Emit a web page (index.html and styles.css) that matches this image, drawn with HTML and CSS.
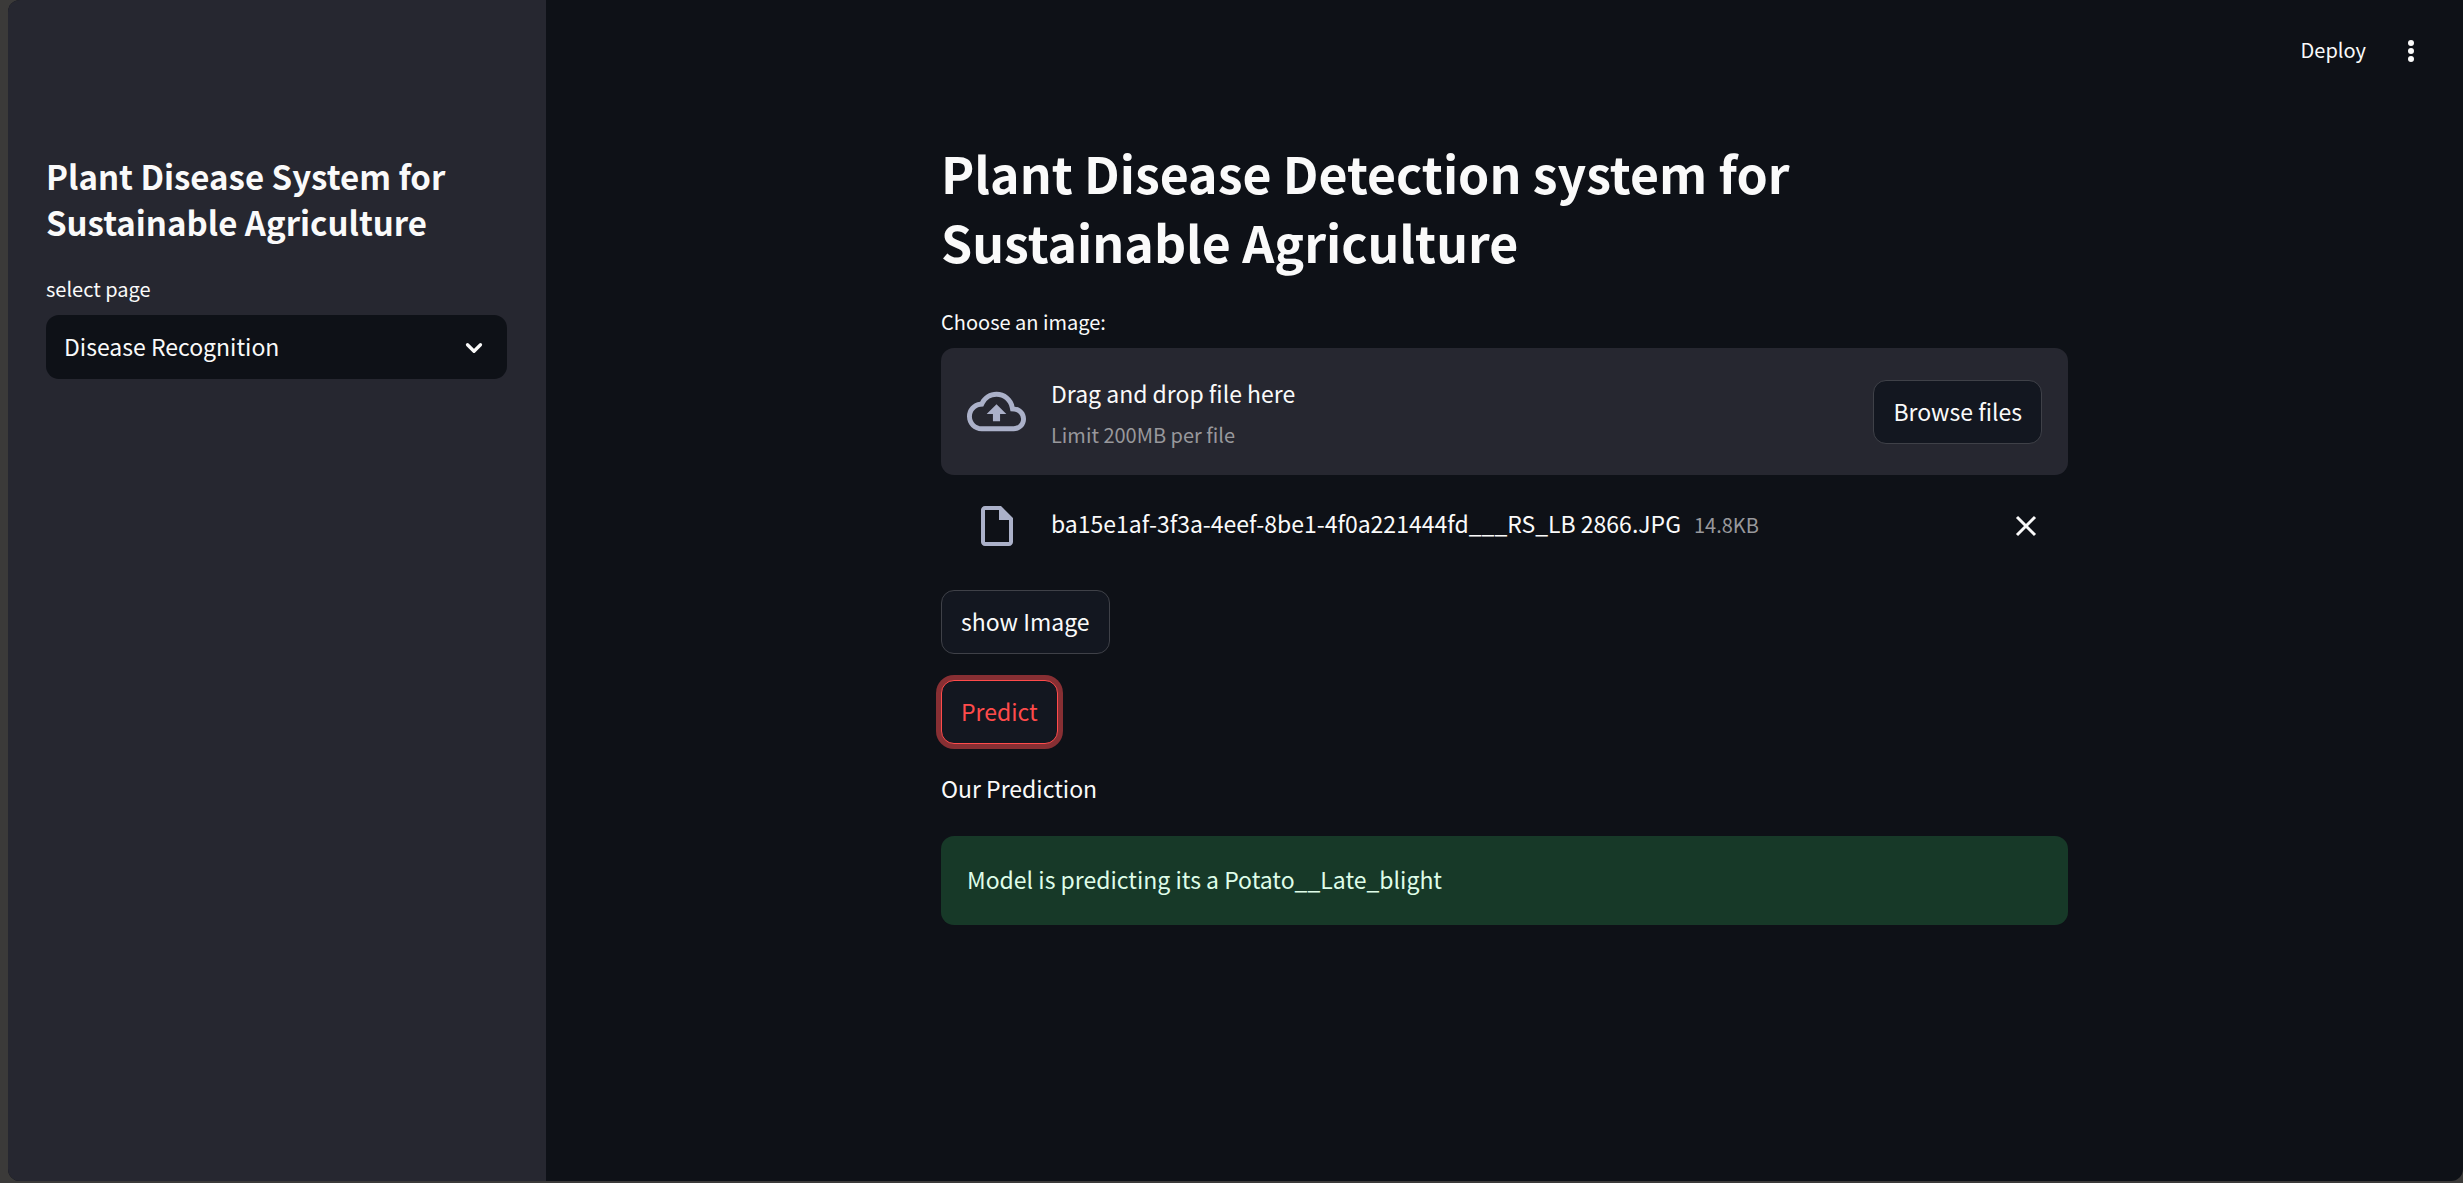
FILE: index.html
```html
<!DOCTYPE html>
<html lang="en">
<head>
<meta charset="utf-8">
<title>Plant Disease Detection</title>
<link rel="stylesheet" href="styles.css">
</head>
<body>
<div class="app">
  <aside class="sidebar">
    <h2 class="sidebar-title">Plant Disease System for Sustainable Agriculture</h2>
    <label class="label" for="page">select page</label>
    <div class="select-box">
      <select class="select" id="page"><option>Disease Recognition</option></select>
      <svg class="chevron" viewBox="0 0 24 24" aria-hidden="true"><path d="M6 9l6 6 6-6"/></svg>
    </div>
  </aside>
  <div class="page">
    <header class="toolbar">
      <button class="plain deploy" type="button">Deploy</button>
      <button class="plain" type="button" aria-label="Main menu">
        <svg class="dots" viewBox="0 0 26 26"><circle cx="13" cy="5" r="3"/><circle cx="13" cy="13" r="3"/><circle cx="13" cy="21" r="3"/></svg>
      </button>
    </header>
    <main class="content">
      <h1 class="title">Plant Disease Detection system for Sustainable Agriculture</h1>
      <label class="label" for="browse">Choose an image:</label>
      <section class="dropzone">
        <svg class="cloud" viewBox="0 0 24 24" aria-hidden="true"><path d="M19.35 10.04A7.49 7.49 0 0 0 12 4C9.11 4 6.6 5.64 5.35 8.04A5.994 5.994 0 0 0 0 14c0 3.31 2.69 6 6 6h13c2.76 0 5-2.24 5-5 0-2.64-2.05-4.78-4.65-4.96zM19 18H6c-2.21 0-4-1.79-4-4 0-2.05 1.53-3.76 3.56-3.97l1.07-.11.5-.95A5.469 5.469 0 0 1 12 6c2.62 0 4.88 1.86 5.39 4.43l.3 1.5 1.53.11A2.98 2.98 0 0 1 22 15c0 1.65-1.35 3-3 3zM8 13h2.55v3h2.9v-3H16l-4-4z"/></svg>
        <div class="drop-text">
          <span>Drag and drop file here</span>
          <small class="muted">Limit 200MB per file</small>
        </div>
        <button class="button" id="browse" type="button">Browse files</button>
      </section>
      <div class="file">
        <div class="file-icon"><svg class="doc" viewBox="0 0 24 24" aria-hidden="true"><path d="M6 2c-1.1 0-2 .9-2 2v16c0 1.1.9 2 2 2h12c1.1 0 2-.9 2-2V8l-6-6H6zm0 18V4h7v5h5v11H6z"/></svg></div>
        <div class="file-name"><span>ba15e1af-3f3a-4eef-8be1-4f0a221444fd___RS_LB 2866.JPG</span><small class="muted">14.8KB</small></div>
        <button class="plain" type="button" aria-label="Remove file">
          <svg class="close" viewBox="0 0 32 32"><path d="M7 7l18 18M25 7L7 25"/></svg>
        </button>
      </div>
      <div class="actions">
        <button class="button" type="button">show Image</button>
        <button class="button active" type="button">Predict</button>
      </div>
      <p class="result-label">Our Prediction</p>
      <div class="alert" role="alert">Model is predicting its a Potato__Late_blight</div>
    </main>
  </div>
</div>
</body>
</html>
```
FILE: styles.css
```css
* { box-sizing: border-box; }

body {
  margin: 0;
  background: #3b3a39;
  color: #fafafa;
  font-family: "Source Sans Pro", "Noto Sans CJK SC", sans-serif;
  font-size: 23px;
  line-height: 36px;
}

button, select { font: inherit; color: inherit; }
h1, h2, p { margin: 0; }
svg { display: block; }

.app {
  display: flex;
  min-height: calc(100vh - 2px);
  margin: 0 0 2px 8px;
  border-radius: 12px 0 12px 12px;
  overflow: hidden;
  background: #0e1117;
}

.sidebar {
  flex: 0 0 538px;
  padding: 153px 39px 40px 38px;
  background: #262730;
}

.sidebar-title {
  margin-bottom: 26px;
  font-size: 33px;
  line-height: 46px;
  font-weight: 600;
}

.label {
  display: block;
  margin-bottom: 8px;
  font-size: 20px;
}

.select-box { position: relative; }

.select {
  display: block;
  width: 100%;
  height: 64px;
  padding: 0 60px 2px 18px;
  border: 0;
  border-radius: 13px;
  background: #0e1117;
  appearance: none;
}

.chevron {
  position: absolute;
  top: 20px;
  right: 20px;
  width: 26px;
  fill: none;
  stroke: #fafafa;
  stroke-width: 3;
  stroke-linecap: round;
  stroke-linejoin: round;
  pointer-events: none;
}

.page { flex: 1; min-width: 0; }

.toolbar {
  display: flex;
  align-items: center;
  justify-content: flex-end;
  gap: 32px;
  height: 102px;
  padding-right: 39px;
}

.plain {
  padding: 0;
  border: 0;
  background: none;
}

.deploy { padding-bottom: 2px; font-size: 20px; }
.dots { width: 26px; fill: #fafafa; }

.content {
  max-width: 1127px;
  margin: 0 auto;
  padding: 36px 0 80px;
}

.title {
  margin-bottom: 28px;
  font-size: 50px;
  line-height: 69px;
  font-weight: 600;
}

.dropzone {
  display: flex;
  align-items: center;
  gap: 25px;
  min-height: 127px;
  padding: 0 26px;
  border-radius: 13px;
  background: #262730;
}

.cloud { width: 59px; fill: #abb1c9; }

.drop-text {
  display: flex;
  flex: 1;
  flex-direction: column;
  gap: 6px;
  padding-top: 4px;
}

.muted { font-size: 20px; color: #98989c; }

.button {
  height: 64px;
  padding: 0 19px 2px;
  border: 1px solid #3f4148;
  border-radius: 13px;
  background: #131720;
}

.active {
  border-color: #ff4b4b;
  color: #ff4b4b;
  box-shadow: 0 0 0 5px #872f33;
}

.file {
  display: flex;
  align-items: center;
  gap: 25px;
  padding: 27px 26px 40px;
}

.file-icon {
  display: flex;
  justify-content: center;
  width: 59px;
}

.doc { width: 48px; fill: #abb1c9; }

.file-name {
  display: flex;
  flex: 1;
  align-items: baseline;
  gap: 13px;
  padding-bottom: 4px;
}

.close {
  width: 32px;
  fill: none;
  stroke: #fafafa;
  stroke-width: 3;
}

.actions {
  display: flex;
  flex-direction: column;
  align-items: flex-start;
  gap: 26px;
}

.result-label { margin: 26px 0 30px; }

.alert {
  padding: 25px 26px 28px;
  border-radius: 13px;
  background: #173928;
  color: #dffde9;
}
```
